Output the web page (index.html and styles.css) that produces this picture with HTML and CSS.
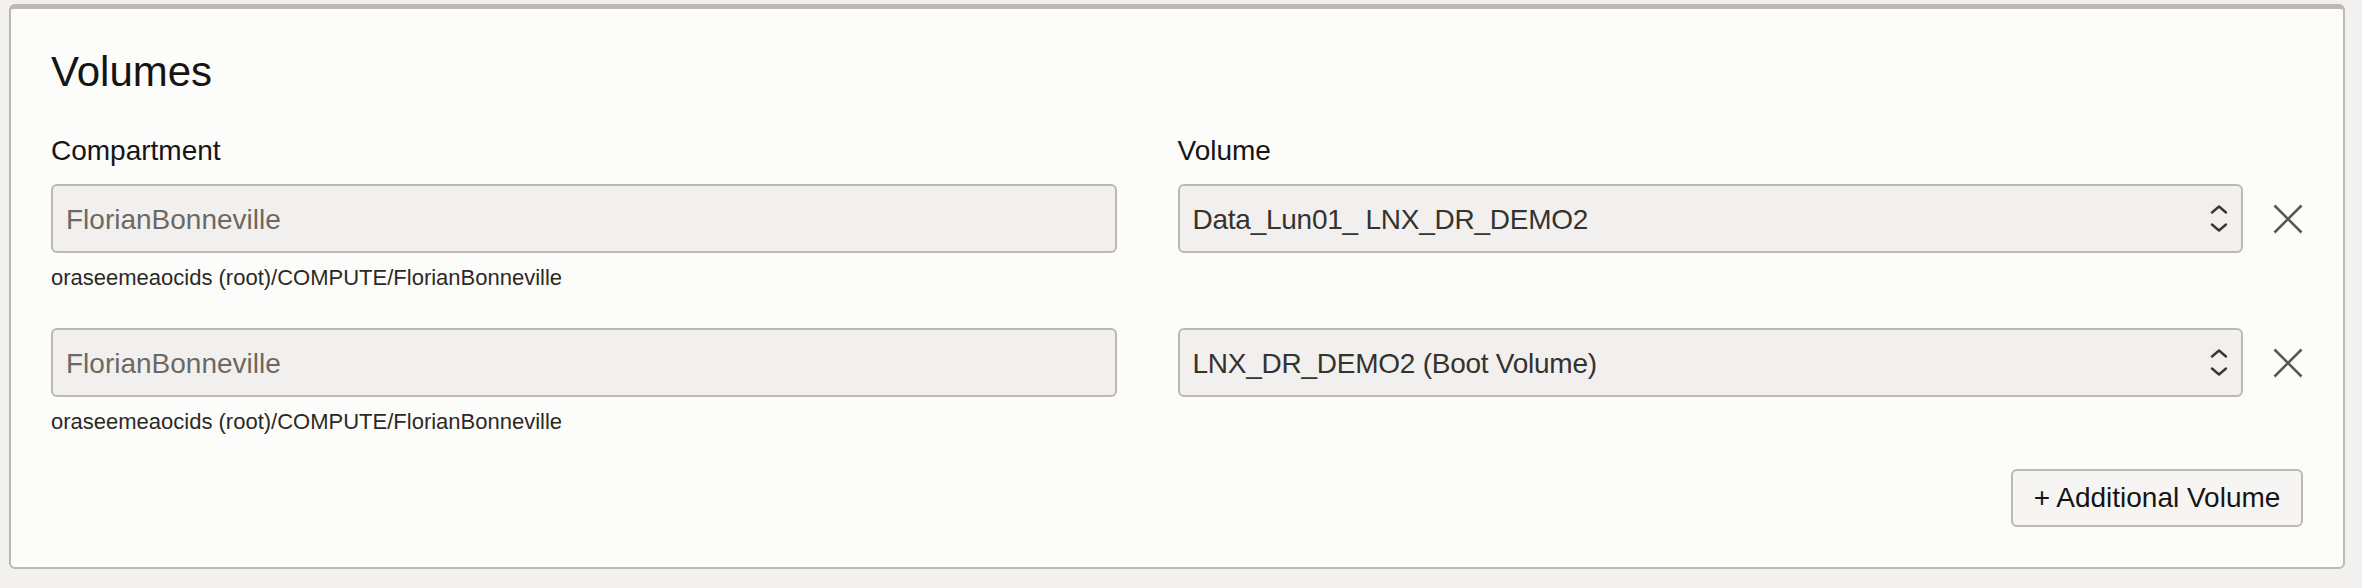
FILE: index.html
```html
<!DOCTYPE html>
<html lang="en">
<head>
<meta charset="utf-8">
<title>Volumes</title>
<link rel="stylesheet" href="styles.css">
</head>
<body>
  <section class="card">
    <h2 class="title">Volumes</h2>

    <div class="row labels">
      <div class="cell-left"><span class="label">Compartment</span></div>
      <div class="cell-right"><span class="label">Volume</span></div>
    </div>

    <div class="row entry">
      <div class="cell-left">
        <div class="input disabled">FlorianBonneville</div>
        <div class="helper">oraseemeaocids (root)/COMPUTE/FlorianBonneville</div>
      </div>
      <div class="cell-right">
        <div class="select">
          <span class="select-text">Data_Lun01_ LNX_DR_DEMO2</span>
          <svg class="chevrons" width="18" height="28" viewBox="0 0 18 28" aria-hidden="true">
            <polyline points="2,7.5 9,1.5 16,7.5" fill="none" stroke="#3a3632" stroke-width="2.4" stroke-linecap="round" stroke-linejoin="round"/>
            <polyline points="2,19.5 9,25.5 16,19.5" fill="none" stroke="#3a3632" stroke-width="2.4" stroke-linecap="round" stroke-linejoin="round"/>
          </svg>
        </div>
        <button class="remove" type="button" aria-label="Remove">
          <svg width="30" height="30" viewBox="0 0 30 30" aria-hidden="true">
            <path d="M1.5 1.5 L28.5 28.5 M28.5 1.5 L1.5 28.5" stroke="#5a5550" stroke-width="2.6" fill="none"/>
          </svg>
        </button>
      </div>
    </div>

    <div class="row entry second">
      <div class="cell-left">
        <div class="input disabled">FlorianBonneville</div>
        <div class="helper">oraseemeaocids (root)/COMPUTE/FlorianBonneville</div>
      </div>
      <div class="cell-right">
        <div class="select">
          <span class="select-text">LNX_DR_DEMO2 (Boot Volume)</span>
          <svg class="chevrons" width="18" height="28" viewBox="0 0 18 28" aria-hidden="true">
            <polyline points="2,7.5 9,1.5 16,7.5" fill="none" stroke="#3a3632" stroke-width="2.4" stroke-linecap="round" stroke-linejoin="round"/>
            <polyline points="2,19.5 9,25.5 16,19.5" fill="none" stroke="#3a3632" stroke-width="2.4" stroke-linecap="round" stroke-linejoin="round"/>
          </svg>
        </div>
        <button class="remove" type="button" aria-label="Remove">
          <svg width="30" height="30" viewBox="0 0 30 30" aria-hidden="true">
            <path d="M1.5 1.5 L28.5 28.5 M28.5 1.5 L1.5 28.5" stroke="#5a5550" stroke-width="2.6" fill="none"/>
          </svg>
        </button>
      </div>
    </div>

    <div class="actions">
      <button class="add-btn" type="button">+ Additional Volume</button>
    </div>
  </section>
</body>
</html>
```

FILE: styles.css
```css
html, body {
  margin: 0;
  background: #f2f1f0;
}

body {
  padding: 4px 17px 0 9px;
  font-family: "Liberation Sans", Arial, Helvetica, sans-serif;
  color: #161513;
}

.card {
  background: #fcfcfb;
  border: 2px solid #bcb8b3;
  border-top-width: 5px;
  border-radius: 6px;
  padding: 38px 40px 40px 40px;
}

.title {
  margin: 0;
  font-size: 42px;
  line-height: 50px;
  font-weight: 400;
  color: #161513;
}

.row {
  display: flex;
  gap: 61px;
  align-items: flex-start;
}

.cell-left {
  flex: 1 1 0;
  min-width: 0;
}

.cell-right {
  flex: 1 1 60px;
  min-width: 0;
  display: flex;
  align-items: center;
}

.labels {
  margin-top: 37px;
}

.label {
  font-size: 28px;
  line-height: 34px;
  color: #161513;
}

.entry {
  margin-top: 16px;
}

.entry.second {
  margin-top: 36px;
}

.input,
.select {
  box-sizing: border-box;
  height: 69px;
  border: 2px solid #bdb8b3;
  border-radius: 6px;
  background: #f1f0ef;
  display: flex;
  align-items: center;
  padding: 2px 13px 0 13px;
  font-size: 28px;
}

.input.disabled {
  color: #6d6863;
}

.select {
  flex: 1 1 auto;
  min-width: 0;
  justify-content: space-between;
  color: #36322e;
  padding-top: 0;
}

.select-text {
  white-space: nowrap;
  padding-top: 2px;
  letter-spacing: -0.25px;
}

.chevrons {
  display: block;
  flex: none;
}

.remove {
  flex: none;
  margin-left: 30px;
  padding: 0;
  border: 0;
  background: none;
  width: 30px;
  height: 30px;
  display: flex;
  align-items: center;
  justify-content: center;
}

.remove svg {
  display: block;
}

.helper {
  margin-top: 11px;
  font-size: 22px;
  line-height: 28px;
  color: #2c2925;
}

.actions {
  margin-top: 33px;
  display: flex;
  justify-content: flex-end;
}

.add-btn {
  box-sizing: border-box;
  height: 58px;
  width: 292px;
  border: 2px solid #bdb8b3;
  border-radius: 6px;
  background: #f6f5f4;
  font-family: "Liberation Sans", Arial, Helvetica, sans-serif;
  font-size: 28px;
  color: #161513;
  padding: 0;
}
```
